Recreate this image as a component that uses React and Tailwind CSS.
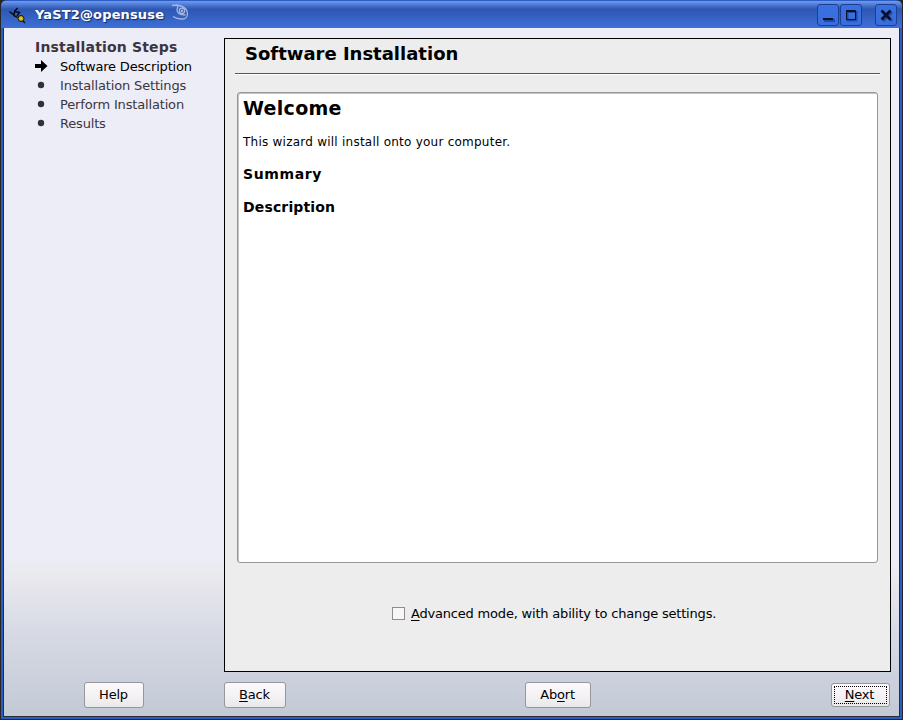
const steps = [
  { label: 'Software Description', current: true, cls: 'tracking-[-0.18px]' },
  { label: 'Installation Settings', cls: 'tracking-[-0.16px]' },
  { label: 'Perform Installation', cls: 'tracking-[-0.16px]' },
  { label: 'Results', cls: 'tracking-[-0.18px]' },
];

function TitleButton({ children, className = '' }) {
  return (
    <button className={`h-[22px] w-[22px] rounded-[3px] border border-[#1c3f94] bg-linear-to-b from-[#3a70e0] to-[#3a6ddc] ${className}`}>
      <svg width="20" height="20" viewBox="0 0 20 20">{children}</svg>
    </button>
  );
}

function Button({ children, className = '' }) {
  return (
    <button className={`flex h-[26px] items-center justify-center rounded-[3px] border border-[#979797] bg-linear-to-b from-[#fcf9fd] via-[#f4f2f5] to-[#e9e9e9] pr-px pb-[2px] text-[13px] leading-[15px] tracking-[-0.2px] ${className}`}>
      {children}
    </button>
  );
}

const Key = ({ children }) => <span className="underline decoration-1 underline-offset-2">{children}</span>;

export default function App() {
  return (
    <div className="h-[720px] w-[903px] overflow-hidden bg-[#262626] font-['DejaVu_Sans',sans-serif] text-[13px] text-black">
      <div className="flex h-[719px] w-[901px] translate-x-px flex-col overflow-hidden rounded-t-[6px] bg-[#2b5cc4] pt-px">
        <header className="flex h-[27px] shrink-0 items-start bg-linear-to-b from-[#6e9bf0] via-[#2e57b3] via-30% to-[#3e6fd8] pl-2">
          <svg className="mt-[6px]" width="17" height="17" viewBox="0 0 17 17">
            <path d="M0.500 4.500L5.500 8.500M8.500 1L5.500 4.500L5 8.500L8.500 10.500M5.500 4.500L10.500 5.500L8 9" stroke="#05070f" strokeWidth="1.400" fill="none" />
            <path d="M13 13l3 3" stroke="#111" strokeWidth="1.500" />
            <circle cx="12" cy="11.500" r="3" fill="#c9b000" stroke="#111" />
            <circle cx="12" cy="11.500" r="0.800" fill="#f4f0b0" />
          </svg>
          <span className="mt-[6px] ml-[9px] text-[13px] leading-[16px] font-bold tracking-[0.14px] whitespace-nowrap text-white [text-shadow:1px_1px_1px_#14285c]">YaST2@opensuse</span>
          <svg className="mt-[3px] ml-[6px]" width="20" height="18" viewBox="0 0 20 18" fill="none" stroke="#a4b6e0" strokeWidth="1.300">
            <path d="M2 1.500L7 1C12 2 16 4 17 7C18 11 17 14 14 14.800C9 15.500 6 14.500 3 12.500M7 1.500C9 3 7 4 7 6C7 9 10 11 15.500 11" />
            <circle cx="12" cy="6.800" r="2.700" />
            <circle cx="12" cy="6.800" r="0.600" />
          </svg>
          <div className="flex-1" />
          <div className="mt-[3px] mr-[5px] flex">
            <TitleButton>
              <path d="M6 14h11v3H6z" fill="#234aa3" />
              <path d="M5 13h10v2H5z" fill="#081128" />
            </TitleButton>
            <TitleButton className="ml-px">
              <path d="M6.500 7h9v8.500h-9z" stroke="#234aa3" strokeWidth="2" fill="none" />
              <path d="M5.500 5.500h9v9h-9zM5 6.500h10" stroke="#081128" fill="none" />
            </TitleButton>
            <TitleButton className="ml-[13px]">
              <path d="M7 7l9 9M16 7l-9 9" stroke="#234aa3" strokeWidth="3" />
              <path d="M5.500 5.500l9 9M14.500 5.500l-9 9" stroke="#081128" strokeWidth="2.700" />
            </TitleButton>
          </div>
        </header>
        <div className="mx-[2px] flex h-[689px] shrink-0 flex-col border-x border-b border-[#2c2c34] bg-[linear-gradient(180deg,#ededf7_0,#ededf7_528px,#e9e9ee_548px,#d8dbe6_600px,#c2c9d5_688px)]">
          <div className="flex h-[644px] shrink-0 pt-[10px]">
            <nav className="w-[220px] shrink-0 pl-[31px] text-[#3b3540]">
              <h2 className="text-[14px] leading-[18px] font-bold tracking-[0.18px] whitespace-nowrap">Installation Steps</h2>
              <ul className="pt-px">
                {steps.map((s) => (
                  <li key={s.label} className={`flex h-[19px] items-center ${s.current ? 'text-black' : ''}`}>
                    <svg className="mr-[12px] w-[13px]" height="13" viewBox="0 0 13 13">
                      {s.current ? <path d="M0 4h6V0l6.500 6L6 12V8H0z" /> : <circle cx="6" cy="6" r="3.200" fill="#303238" />}
                    </svg>
                    <span className={`whitespace-nowrap ${s.cls}`}>{s.label}</span>
                  </li>
                ))}
              </ul>
            </nav>
            <main className="flex w-[667px] flex-col border border-black bg-[#ededed] px-[10px]">
              <h1 className="h-[35px] border-b border-[#555] pt-[4px] pl-[10px] text-[18px] leading-[22px] font-bold whitespace-nowrap shadow-[0_1px_0_#fff]">Software Installation</h1>
              <section className="mt-[18px] mr-[2px] ml-[2px] h-[471px] rounded-[3px] border border-[#979797] bg-white pl-[5px] shadow-[inset_1px_1px_0_#c4c4c4]">
                <h2 className="mt-[4px] text-[19px] leading-[22px] font-bold tracking-[0.3px]">Welcome</h2>
                <p className="mt-[14px] text-[12px] leading-[18px] tracking-[0.24px]">This wizard will install onto your computer.</p>
                <h3 className="mt-[14px] text-[14px] leading-[18px] font-bold tracking-[0.6px]">Summary</h3>
                <h3 className="mt-[15px] text-[14px] leading-[18px] font-bold tracking-[0.15px]">Description</h3>
              </section>
              <label className="mt-[41px] ml-[157px] flex items-center gap-[6px] tracking-[-0.195px] whitespace-nowrap">
                <span className="size-[13px] border border-[#8e8e8e] bg-[#f8f6f9]" />
                <span><Key>A</Key>dvanced mode, with ability to change settings.</span>
              </label>
            </main>
          </div>
          <footer className="flex pt-[10px]">
            <Button className="ml-[80px] w-[60px]">Help</Button>
            <Button className="ml-[80px] w-[62px]"><Key>B</Key>ack</Button>
            <Button className="ml-[239px] w-[66px]">Ab<Key>o</Key>rt</Button>
            <Button className="mt-px ml-[240px] h-[24px]! w-[59px] p-[2px]!"><span className="h-[18px] w-full border border-dotted border-black pr-[2px] leading-[15px]"><Key>N</Key>ext</span></Button>
          </footer>
        </div>
      </div>
    </div>
  );
}
